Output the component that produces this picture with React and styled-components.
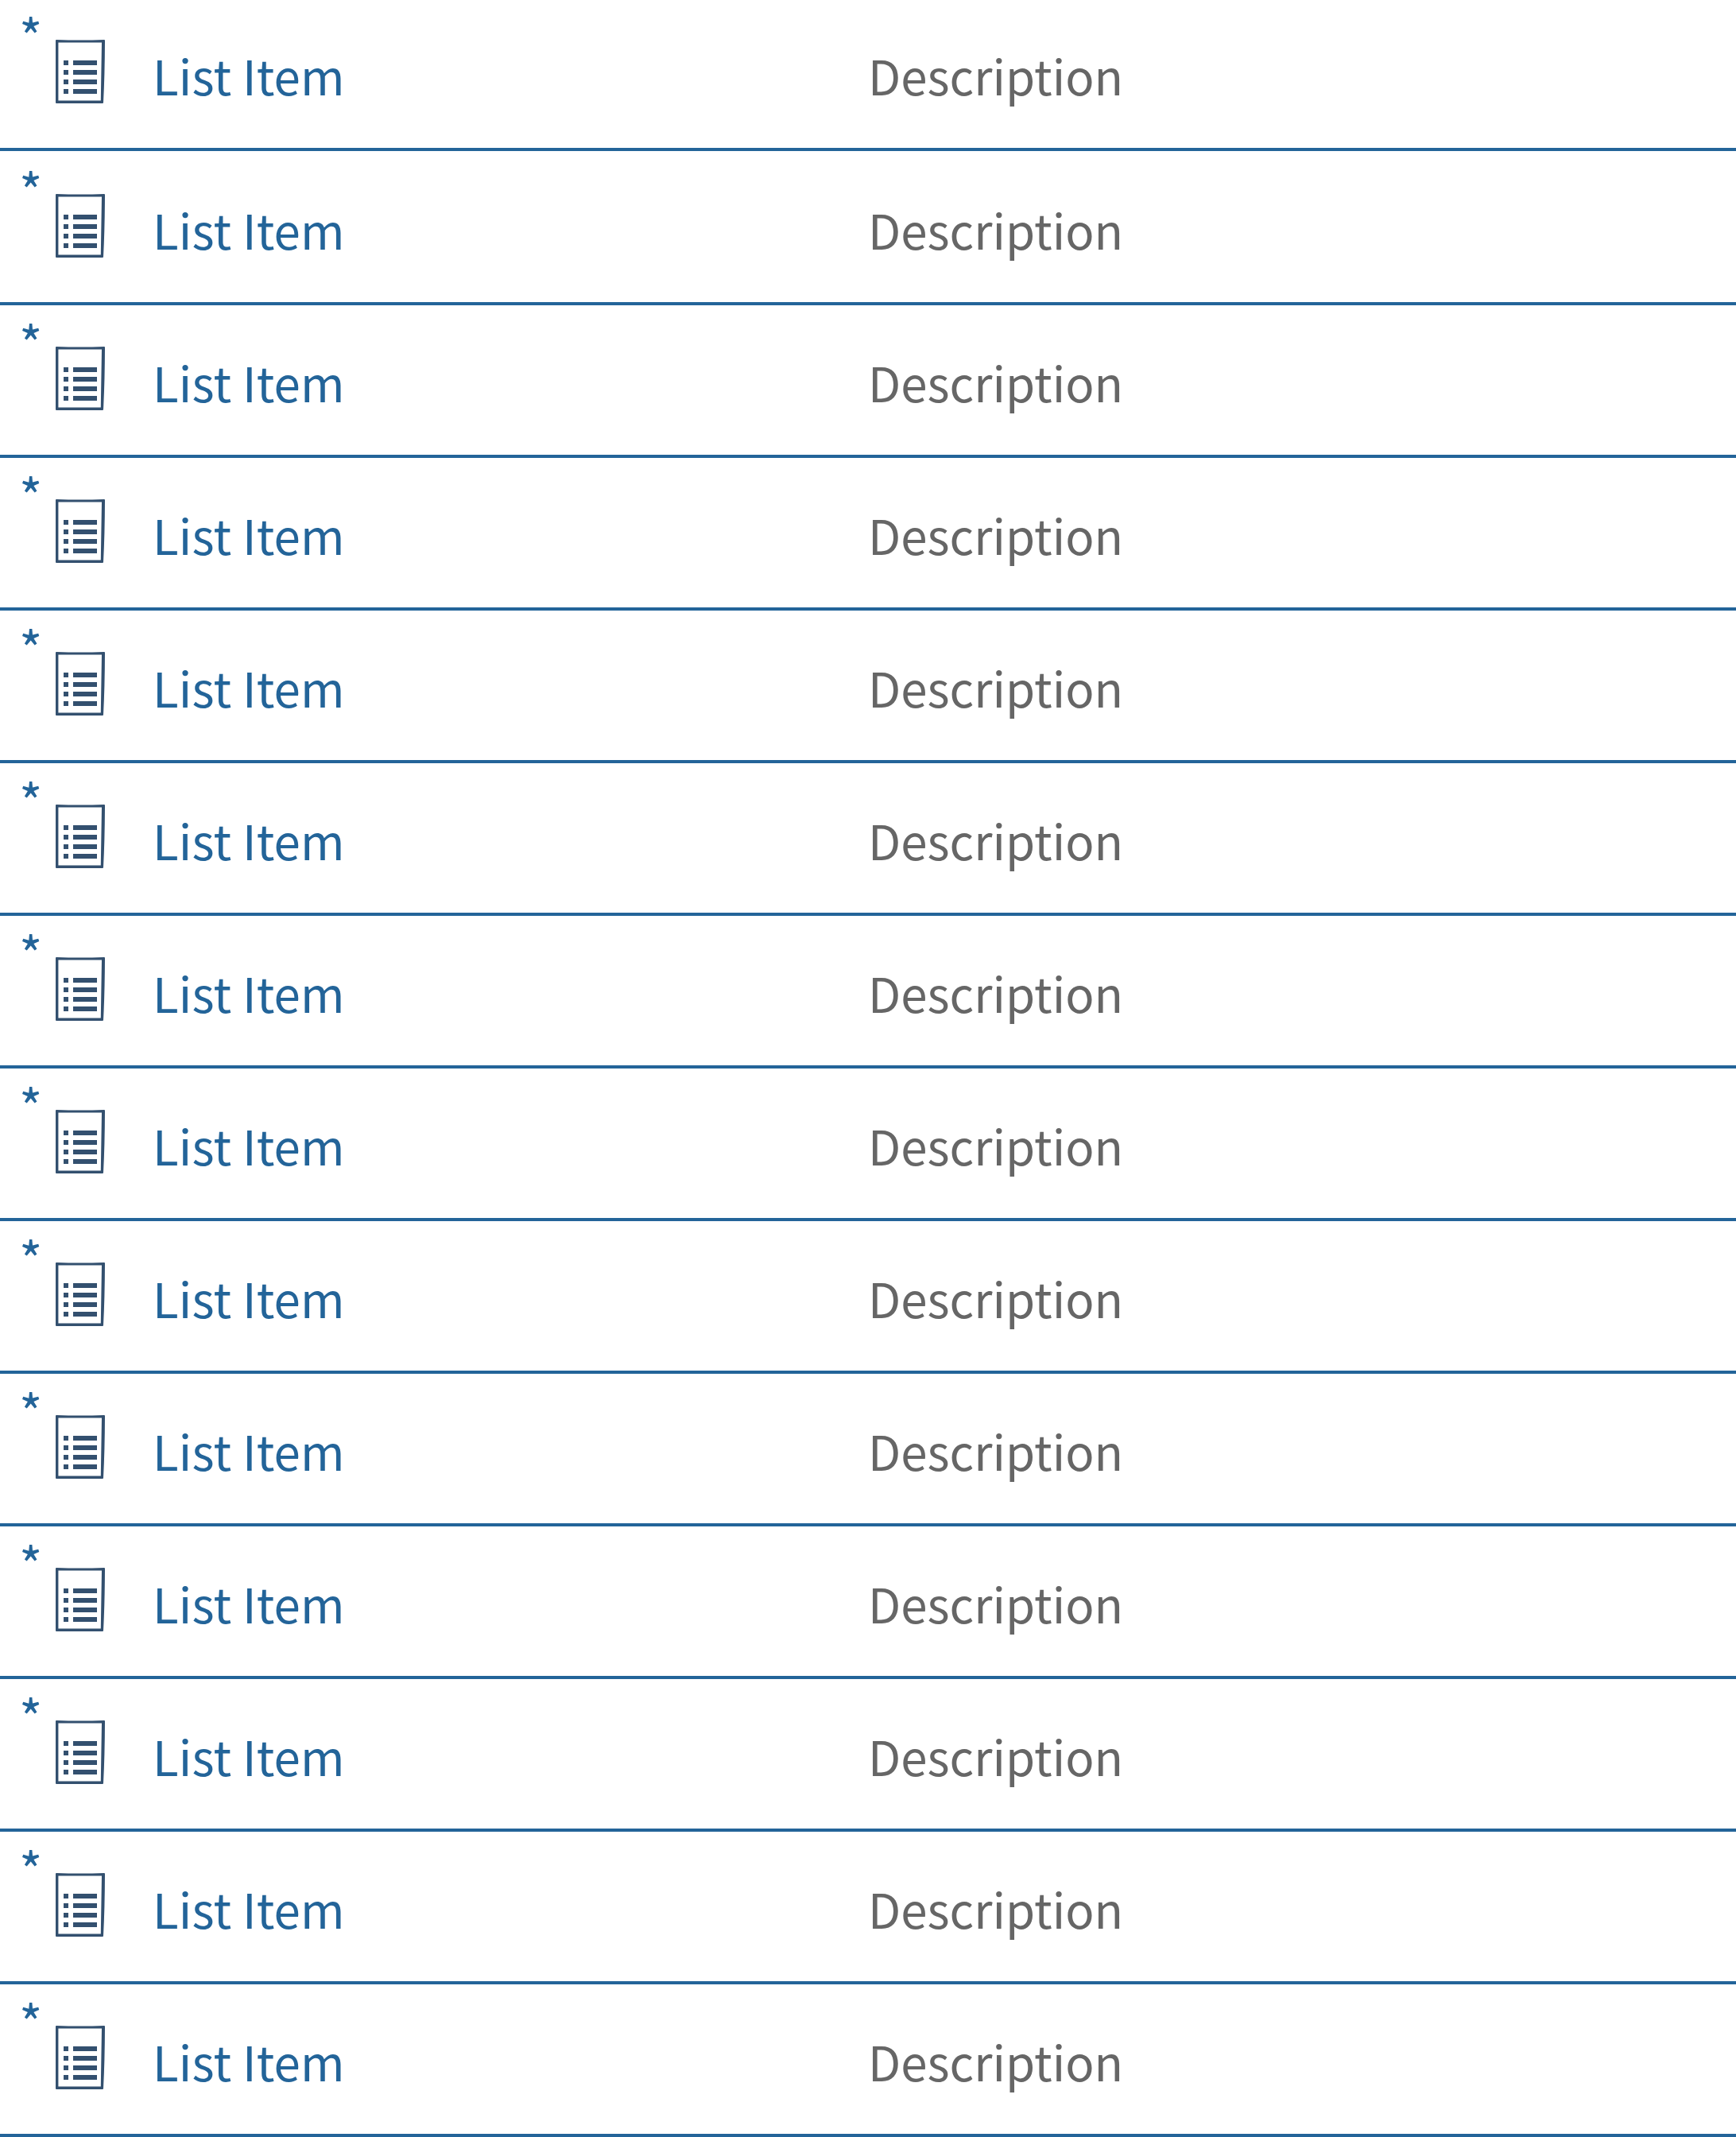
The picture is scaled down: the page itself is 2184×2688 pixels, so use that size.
import React from "react";
import styled, { createGlobalStyle } from "styled-components";

const GlobalStyle = createGlobalStyle`
  body {
    margin: 0;
    background: #fff;
    overflow: hidden;
    font-family: "Noto Sans CJK SC", "Noto Sans", sans-serif;
  }
`;

const List = styled.ul`
  display: flex;
  flex-direction: column;
  margin: -2px 0 0;
  padding: 0;
  list-style: none;
`;

const Row = styled.li`
  display: grid;
  grid-template-columns: 24px 45px 123px 900px 1fr;
  height: 188px;
  border-bottom: 4px solid #236499;

  &:first-child {
    margin-bottom: 2px;
  }
`;

const Marker = styled.span`
  grid-column: 2;
  margin-top: 16px;
  font-size: 63px;
  line-height: 60px;
  color: #236499;
`;

const DocumentIcon = styled.svg`
  width: 64px;
  height: 82px;
  margin-top: 51px;
  fill: #33506f;
`;

const Text = styled.span`
  margin-top: 51px;
  font-size: 60px;
  line-height: 90px;
  white-space: nowrap;
  letter-spacing: ${(p) => p.$tracking};
  color: ${(p) => p.$color};
`;

function ListIcon() {
  return (
    <DocumentIcon viewBox="0 0 64 82" aria-hidden="true">
      <path
        fillRule="evenodd"
        d="M1 2Q1 1 2 1Q32 2 62 1Q63 1 63 2Q62.8 46 61 80Q61 81 60 81H2Q1 81 1 80ZM4.4 4.4V77.6H57.8L59 4.4Z"
      />
      {[27, 39, 51, 63].map((y) => (
        <path key={y} d={`M11 ${y}h6v6h-6zM23 ${y}h30v6h-30z`} />
      ))}
    </DocumentIcon>
  );
}

const items = Array.from({ length: 14 }, () => ({
  title: "List Item",
  description: "Description",
}));

export default function App() {
  return (
    <>
      <GlobalStyle />
      <List>
        {items.map((item, i) => (
          <Row key={i}>
            <Marker>*</Marker>
            <ListIcon />
            <Text $color="#236499" $tracking="0.2px">{item.title}</Text>
            <Text $color="#666" $tracking="0px">{item.description}</Text>
          </Row>
        ))}
      </List>
    </>
  );
}
